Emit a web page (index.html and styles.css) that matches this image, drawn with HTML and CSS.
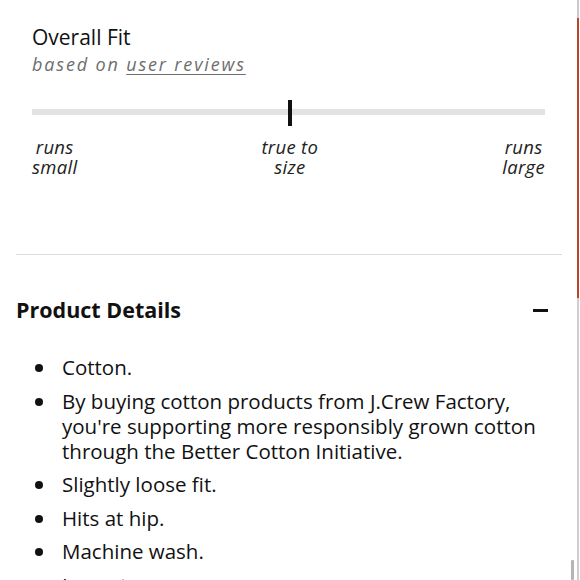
FILE: index.html
```html
<!DOCTYPE html>
<html>
<head>
<meta charset="utf-8">
<link rel="stylesheet" href="styles.css">
</head>
<body>
<div class="page">
  <section class="fit">
    <h2 class="fit-title">Overall Fit</h2>
    <p class="fit-sub">based on <a href="#" class="fit-link">user reviews</a></p>
    <div class="scale">
      <div class="track"></div>
      <div class="marker"></div>
    </div>
    <div class="labels">
      <span class="lbl">runs<br>small</span>
      <span class="lbl">true to<br>size</span>
      <span class="lbl">runs<br>large</span>
    </div>
  </section>
  <hr class="divider">
  <section class="details">
    <div class="details-head">
      <h2 class="details-title">Product Details</h2>
      <span class="minus"></span>
    </div>
    <ul class="bullets">
      <li>Cotton.</li>
      <li>By buying cotton products from J.Crew Factory, you're supporting more responsibly grown cotton through the Better Cotton Initiative.</li>
      <li>Slightly loose fit.</li>
      <li>Hits at hip.</li>
      <li>Machine wash.</li>
      <li>Import.</li>
    </ul>
  </section>
</div>
<div class="sidebar-line"><span class="seg-top"></span><span class="seg-red"></span><span class="seg-rest"></span></div>
<div class="thumb"></div>
</body>
</html>
```
FILE: styles.css
```css
html, body {
  margin: 0;
  padding: 0;
  background: #fff;
  overflow: hidden;
}
body {
  font-family: "Open Sans", "Liberation Sans", sans-serif;
  color: #111;
  width: 580px;
  height: 580px;
}
.page {
  padding: 0 18px 0 16px;
}
.fit {
  padding: 24px 17px 0 16px;
}
.fit-title {
  margin: 0;
  font-size: 21px;
  font-weight: 400;
  line-height: 26px;
  color: #111;
}
.fit-sub {
  margin: 2px 0 0;
  font-size: 18px;
  line-height: 24px;
  font-style: italic;
  letter-spacing: 1.85px;
  color: #6e6e6e;
}
.fit-link {
  color: #6e6e6e;
  text-decoration: underline;
  text-decoration-thickness: 1px;
  text-underline-offset: 3px;
}
.scale {
  position: relative;
  height: 26px;
  margin-top: 24px;
}
.track {
  position: absolute;
  left: 0;
  right: 0;
  top: 9px;
  height: 6px;
  background: #e2e2e2;
}
.marker {
  position: absolute;
  left: 256px;
  top: 0;
  width: 4px;
  height: 26px;
  background: #111;
}
.labels {
  display: flex;
  justify-content: space-between;
  margin-top: 11px;
}
.lbl {
  text-align: center;
  font-style: italic;
  font-size: 18.5px;
  line-height: 20px;
  letter-spacing: 0.3px;
  color: #222;
}
.divider {
  border: 0;
  border-top: 1px solid #dcdcdc;
  margin: 77px 0 0;
}
.details-head {
  display: flex;
  justify-content: space-between;
  align-items: center;
  margin-top: 40px;
  padding-right: 14px;
}
.details-title {
  margin: 0;
  font-size: 21.5px;
  font-weight: 700;
  line-height: 30px;
  color: #111;
}
.minus {
  width: 15px;
  height: 3px;
  background: #111;
}
.bullets {
  list-style: none;
  margin: 30px 0 0;
  padding: 0 0 0 46px;
}
.bullets li {
  position: relative;
  font-size: 20.5px;
  line-height: 25px;
  margin-bottom: 8.5px;
  color: #111;
}
.bullets li::before {
  content: "";
  position: absolute;
  left: -27px;
  top: 9px;
  width: 8px;
  height: 8px;
  border-radius: 50%;
  background: #111;
}
.sidebar-line {
  position: fixed;
  top: 0;
  right: 1px;
  width: 2px;
  height: 580px;
  display: flex;
  flex-direction: column;
}
.seg-top {
  height: 18px;
  background: #c9c9c9;
}
.seg-red {
  height: 280px;
  background: #b9452c;
}
.seg-rest {
  flex: 1;
  background: #cfcfcf;
}
.thumb {
  position: fixed;
  right: 6px;
  top: 560px;
  width: 3px;
  height: 20px;
  background: #b5b5b5;
  border-radius: 1px;
}
```
